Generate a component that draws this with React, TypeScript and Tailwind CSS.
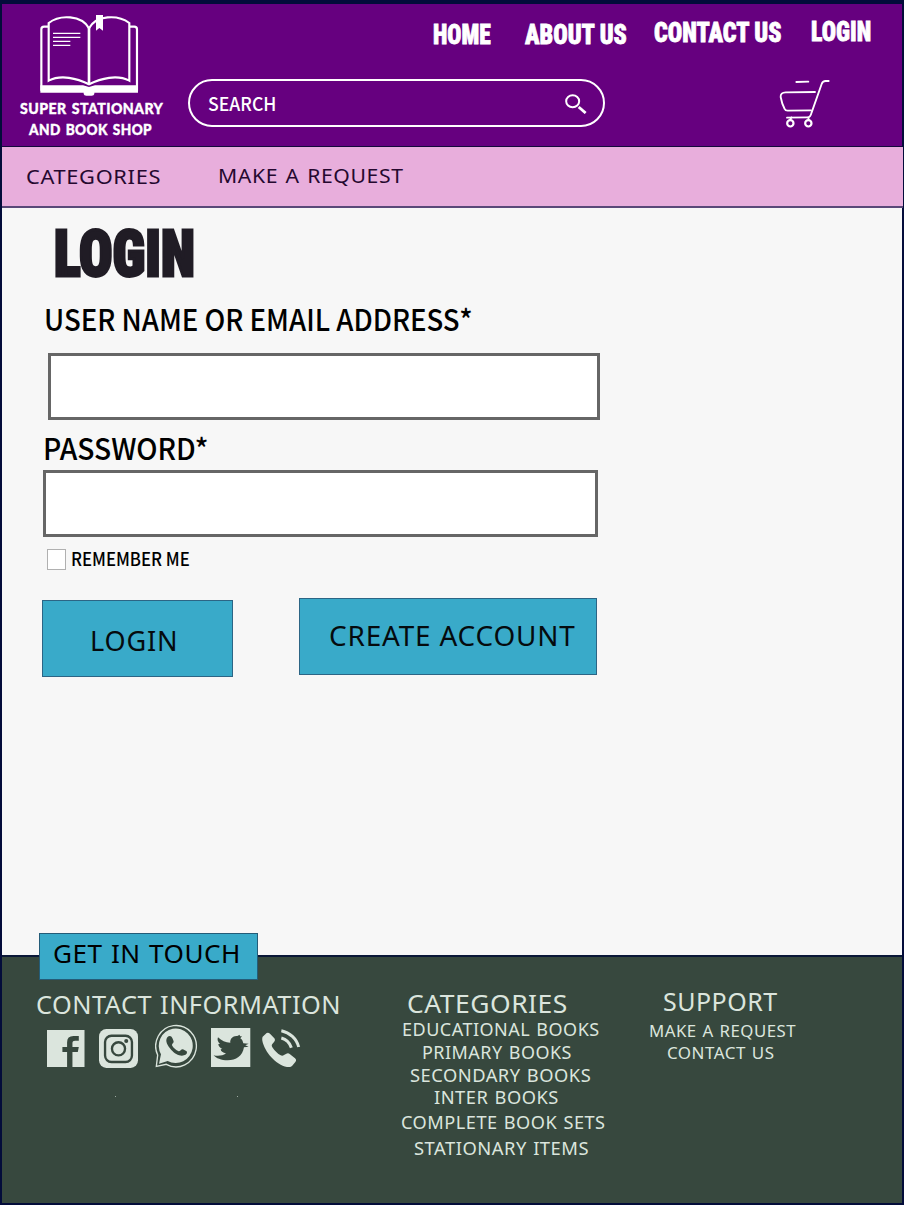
import type { ReactNode } from "react";

const VERDANA = "font-['Noto_Sans',sans-serif] tracking-[0.03em] [word-spacing:0.06em]";
const MYRIAD = "font-['Noto_Sans_CJK_SC',sans-serif] font-medium";
const IMPACT = "font-['Roboto_Condensed','Roboto',sans-serif] font-black [font-stretch:75%]";

function Label({ className, children }: { className: string; children: ReactNode }) {
  return (
    <span className={`block w-max shrink-0 origin-left whitespace-nowrap leading-none ${className}`}>
      {children}
    </span>
  );
}

function BookLogo() {
  return (
    <svg viewBox="0 0 306 250" className="ml-[35px] h-[83.3px] w-[102px]" fill="none" stroke="#fff" strokeWidth="6.5">
      <path d="M33 35H21a8 8 0 0 0-8 8V224H300V43a8 8 0 0 0-8-8H279" />
      <path d="M10 211H138L156 216L174 211H303V233H172V237Q171 242 164 242H148Q141 242 140 237V233H10Z" fill="#fff" stroke="none" />
      <path d="M156 40C134 0 68 -2 35 24V197C72 178 120 190 156 208C192 190 240 178 277 197V24C242 -2 178 0 156 40Z" />
      <path d="M156 36V210" strokeWidth="8" />
      <path d="M177 0H198V47L187 39L177 47Z" fill="#fff" stroke="none" />
      <path d="M48 55H130M48 67H130M48 79H100M48 91H100" strokeWidth="3.5" />
    </svg>
  );
}

function SearchIcon() {
  return (
    <svg viewBox="0 0 66 62" className="mt-[2px] h-[20.7px] w-[22px]" fill="none" stroke="#fff">
      <ellipse cx="23" cy="22" rx="19.5" ry="18" strokeWidth="6" />
      <path d="M41 39L62 57" strokeWidth="8.5" />
    </svg>
  );
}

function CartIcon() {
  return (
    <svg viewBox="0 0 156 150" className="h-[50px] w-[52px]" fill="none" stroke="#fff" strokeWidth="5.5" strokeLinecap="round" strokeLinejoin="round">
      <path d="M52 9L88 8" />
      <path d="M108 39L20 40Q4 41 5 54Q9 76 17 90Q19 95 26 95L96 94" />
      <path d="M149 6H140Q131 6 128 15L98 100Q94 115 88 115L24 116" />
      <path d="M37 115L33 123M88 115L89 123" />
      <circle cx="34" cy="133" r="9.5" strokeWidth="6.5" />
      <circle cx="88" cy="133" r="9.5" strokeWidth="6.5" />
    </svg>
  );
}

function FacebookIcon() {
  return (
    <svg viewBox="0 0 112 112" className="mt-[6px] h-[37.5px] w-[37.5px] shrink-0">
      <path fill="#dbe5dd" d="M0 0H112V112H76V66H92L95 51H76V39Q76 32 84 32H95V18H79Q60 18 60 37V51H46V66H60V112H0Z" />
    </svg>
  );
}

function InstagramIcon() {
  return (
    <svg viewBox="0 0 116 116" className="ml-[14.5px] mt-[5px] h-[39px] w-[39px] shrink-0">
      <rect width="116" height="116" rx="22" fill="#dbe5dd" />
      <g fill="none" stroke="#37483e" strokeWidth="7">
        <rect x="18" y="20" width="80" height="78" rx="19" />
        <circle cx="58" cy="59" r="19.5" />
      </g>
      <circle cx="81" cy="36" r="6" fill="#37483e" />
    </svg>
  );
}

function WhatsappIcon() {
  return (
    <svg viewBox="0 0 130 132" className="ml-[17.2px] h-[44px] w-[43.3px] shrink-0">
      <path fill="none" stroke="#dbe5dd" strokeWidth="4" d="M4 127L8 93A61 62 0 1 1 34 121Z" />
      <path fill="#dbe5dd" d="M12 119L18 91A51 52 0 1 1 38 111Z" />
      <path
        fill="#37483e"
        d="M37 40C42 34 49 34 52 42L56 52C57 58 50 59 51 64C55 73 63 78 71 82C76 83 78 75 84 76L95 82C98 87 94 93 87 94C75 98 59 89 49 78C38 66 29 51 37 40Z"
      />
    </svg>
  );
}

function TwitterIcon() {
  return (
    <svg viewBox="0 0 118 118" className="ml-[13px] mt-[4.5px] h-[39.3px] w-[39.3px] shrink-0">
      <rect width="118" height="118" fill="#dbe5dd" />
      <path
        fill="#37483e"
        d="M21 28C32 38 43 44 58 44C56 32 67 22 79 24L86 20L87 25L93 25L88 31C94 34 96 41 97 46L113 47L103 52L113 56L99 58C95 84 75 97 50 97C31 97 15 91 8 82C20 85 35 84 45 76C36 75 29 70 29 64L34 63C27 59 22 54 22 48L27 48C20 41 18 35 21 28Z"
      />
    </svg>
  );
}

function PhoneIcon() {
  return (
    <svg viewBox="0 0 116 116" className="ml-[11.5px] mt-[5px] h-[38.7px] w-[38.7px] shrink-0">
      <path
        fill="#dbe5dd"
        d="M2 23L14 12Q19 9 24 14L37 28Q41 34 36 39L31 45Q27 50 32 56C38 65 47 74 56 79Q61 82 66 78L73 74Q79 71 84 76L99 88Q105 93 100 99L90 111Q84 116 75 114C42 107 8 69 1 35Q0 27 2 23Z"
      />
      <g fill="none" stroke="#dbe5dd" strokeWidth="9">
        <path d="M58 5C83 10 104 29 110 54" />
        <path d="M58 27C73 31 83 41 88 56" />
      </g>
    </svg>
  );
}

function Header() {
  return (
    <header className="flex h-[143px] border-b border-[#12093c] bg-[#66007f]">
      <div className="w-[186px] shrink-0 pt-[10.5px] font-['Lato',sans-serif] text-[15.7px] font-black tracking-[0.03em] text-white [-webkit-text-stroke:0.4px_#fff] [word-spacing:0.1em]">
        <BookLogo />
        <Label className="ml-[17.5px] mt-[3.5px] scale-x-[0.9]">SUPER STATIONARY</Label>
        <Label className="ml-[26.5px] mt-[4.8px] scale-x-[0.867]">AND BOOK SHOP</Label>
      </div>
      <div className="flex flex-1 flex-col">
        <nav className={`flex h-[75px] pl-[245px] pt-[14.3px] text-[28px] text-white [-webkit-text-stroke:0.8px_#fff] ${IMPACT}`}>
          <a className="w-[92px] pt-[3px]"><Label className="scale-x-[0.837]">HOME</Label></a>
          <a className="w-[129px] pt-[2.5px]"><Label className="scale-x-[0.858]">ABOUT US</Label></a>
          <a className="w-[157px] pt-[0.5px]"><Label className="scale-x-[0.858]">CONTACT US</Label></a>
          <a><Label className="scale-x-[0.848]">LOGIN</Label></a>
        </nav>
        <div className="flex">
          <div className="flex h-[48px] w-[417px] items-center justify-between rounded-full border-2 border-white pl-[18px] pr-[16px] text-white">
            <Label className={`scale-x-[0.94] text-[18.8px] ${MYRIAD}`}>SEARCH</Label>
            <SearchIcon />
          </div>
          <div className="ml-[174px]"><CartIcon /></div>
        </div>
      </div>
    </header>
  );
}

function CategoryBar() {
  return (
    <nav className={`-mr-px flex h-[61px] border-b-2 border-[#5a4878] bg-[#e8aedc] text-[20.6px] text-[#25082f] ${VERDANA}`}>
      <a className="w-[191.2px] pl-[24px] pt-[19.4px]"><Label className="scale-x-[1.06]">CATEGORIES</Label></a>
      <a className="pl-[24.8px] pt-[18.2px]"><Label className="scale-x-[1.028]">MAKE A REQUEST</Label></a>
    </nav>
  );
}

function LoginForm() {
  return (
    <main className="flex h-[747px] flex-col items-start bg-[#f7f7f7] text-black">
      <h1 className={`ml-[51.5px] mt-[14px] h-[82.3px] text-[64.5px] text-[#201c25] ${IMPACT}`}>
        <Label className="scale-x-[0.862] [-webkit-text-stroke:3px_#201c25]">LOGIN</Label>
      </h1>
      <div className={`ml-[42px] h-[48.7px] text-[29.3px] ${MYRIAD}`}>
        <Label className="scale-x-[0.941]">USER NAME OR EMAIL ADDRESS*</Label>
      </div>
      <input className="ml-[46px] h-[67px] w-[552px] border-3 border-[#666] bg-white" />
      <div className={`ml-[41px] mt-[13.5px] h-[36.5px] text-[29px] ${MYRIAD}`}>
        <Label className="scale-x-[0.974]">PASSWORD*</Label>
      </div>
      <input type="password" className="ml-[41px] h-[67px] w-[555px] border-3 border-[#666] bg-white" />
      <label className={`ml-[45px] mt-[12px] flex h-[21px] text-[18px] ${MYRIAD}`}>
        <span className="mr-[4.5px] h-[21px] w-[19px] border border-[#b0b0b0] bg-white" />
        <Label className="scale-x-[0.93]">REMEMBER ME</Label>
      </label>
      <div className={`ml-[40px] mt-[28px] flex items-start gap-[66.5px] text-[27px] text-[#050b0e] ${VERDANA}`}>
        <button className="mt-[2px] h-[77px] w-[190.5px] border border-[#2c6585] bg-[#39aac9] pl-[47.3px] pt-[4px]">
          <Label className="scale-x-[1.002]">LOGIN</Label>
        </button>
        <button className="mt-[0.5px] h-[77px] w-[297.5px] border border-[#2c6585] bg-[#39aac9] pb-[3px] pl-[29px]">
          <Label className="scale-x-[1.033]">CREATE ACCOUNT</Label>
        </button>
      </div>
    </main>
  );
}

function Footer() {
  return (
    <footer className={`flex flex-1 border-t-2 border-[#0b1838] bg-[#37483e] text-[#dbe5dd] ${VERDANA}`}>
      <section className="w-[398px] shrink-0">
        <div className="-mt-[24px] ml-[37px] h-[47px] w-[219px] border border-[#245c78] bg-[#39aac9] pl-[12.5px] pt-[8.2px] text-[24.5px] text-black">
          <Label className="scale-x-[1.066]">GET IN TOUCH</Label>
        </div>
        <Label className="ml-[33.5px] mt-[13px] scale-x-[1.033] text-[24.5px]">CONTACT INFORMATION</Label>
        <div className="ml-[45px] mt-[6.2px] flex">
          <FacebookIcon />
          <InstagramIcon />
          <WhatsappIcon />
          <TwitterIcon />
          <PhoneIcon />
        </div>
        <div className="ml-[113px] mt-[28px] flex gap-[121px]">
          <span className="size-px bg-[#9caaa0]" />
          <span className="size-px bg-[#9caaa0]" />
        </div>
      </section>
      <section className="w-[246px] shrink-0 pt-[35px] text-[17.5px]">
        <Label className="ml-[7px] h-[29.2px] scale-x-[1.079] text-[24.5px]">CATEGORIES</Label>
        <Label className="ml-[1.8px] h-[23px] scale-x-[1.029]">EDUCATIONAL BOOKS</Label>
        <Label className="ml-[22px] h-[23px] scale-x-[1.026]">PRIMARY BOOKS</Label>
        <Label className="ml-[9.5px] h-[22px] scale-x-[1.046]">SECONDARY BOOKS</Label>
        <Label className="ml-[34.3px] h-[24.7px] scale-x-[1.044]">INTER BOOKS</Label>
        <Label className="ml-[0.5px] h-[26px] scale-x-[1.038]">COMPLETE BOOK SETS</Label>
        <Label className="ml-[13.5px] scale-x-[1.05]">STATIONARY ITEMS</Label>
      </section>
      <section className="pt-[33px] text-[16.5px]">
        <Label className="ml-[16.5px] h-[33.3px] scale-x-[1.02] text-[24.5px]">SUPPORT</Label>
        <Label className="ml-[3.2px] h-[21.3px] scale-x-[1.018]">MAKE A REQUEST</Label>
        <Label className="ml-[20.8px] scale-x-[1.028]">CONTACT US</Label>
      </section>
    </footer>
  );
}

export default function App() {
  return (
    <div className="flex h-[1205px] w-[904px] flex-col border-b-2 border-l-2 border-r-2 border-t-4 border-[#030c3a]">
      <Header />
      <CategoryBar />
      <LoginForm />
      <Footer />
    </div>
  );
}
